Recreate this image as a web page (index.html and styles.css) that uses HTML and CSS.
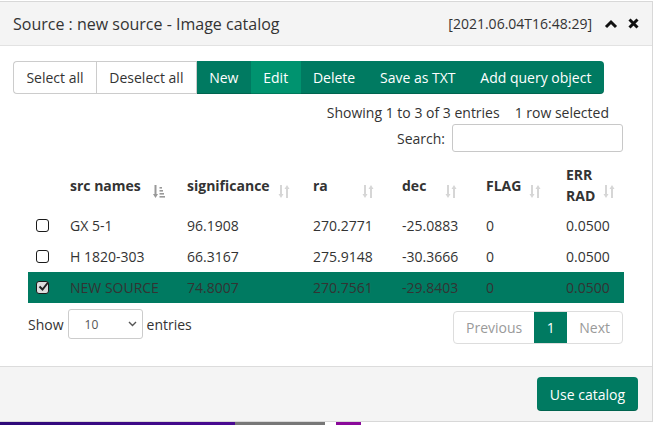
FILE: index.html
```html
<!DOCTYPE html>
<html>
<head>
<meta charset="utf-8">
<link rel="stylesheet" href="styles.css">
</head>
<body>
<div class="modal">
  <div class="modal-header">
    <div class="title">Source : new source - Image catalog</div>
    <div class="header-right">
      <span class="stamp">[2021.06.04T16:48:29]</span>
      <svg class="hicon" width="14" height="10" viewBox="0 0 14 10"><polyline points="2,8 7,3 12,8" fill="none" stroke="#111" stroke-width="3"/></svg>
      <svg class="hicon" width="11" height="11" viewBox="0 0 11 11"><path d="M1.5 1.5 L9.5 9.5 M9.5 1.5 L1.5 9.5" stroke="#111" stroke-width="3"/></svg>
    </div>
  </div>
  <div class="modal-body">
    <div class="btn-group">
      <span class="btn btn-light">Select all</span>
      <span class="btn btn-light">Deselect all</span>
      <span class="btn btn-green">New</span>
      <span class="btn btn-green btn-active">Edit</span>
      <span class="btn btn-green">Delete</span>
      <span class="btn btn-green">Save as TXT</span>
      <span class="btn btn-green btn-last">Add query object</span>
    </div>
    <div class="wrapper">
      <div class="info">Showing 1 to 3 of 3 entries<span class="sel">1 row selected</span></div>
      <div class="search"><label>Search:</label><span class="search-input"></span></div>
      <table class="grid">
        <colgroup>
          <col class="c0"><col class="c1"><col class="c2"><col class="c3"><col class="c4"><col class="c5"><col class="c6">
        </colgroup>
        <thead>
          <tr>
            <th></th>
            <th class="p1"><div class="th"><span>src names</span>
              <svg class="sort" width="12" height="15" viewBox="0 0 12 15"><path d="M2.5 1 V12" stroke="#999" stroke-width="2"/><path d="M0 10 L2.5 14 L5 10 Z" fill="#999"/><rect x="6.5" y="3" width="2.5" height="1.6" fill="#999"/><rect x="6.5" y="6" width="3.5" height="1.6" fill="#999"/><rect x="6.5" y="9" width="4.5" height="1.6" fill="#999"/><rect x="6.5" y="12" width="5.5" height="1.6" fill="#999"/></svg>
            </div></th>
            <th class="p2"><div class="th"><span>significance</span>
              <svg class="sort" width="12" height="15" viewBox="0 0 12 15"><path d="M3 1 V12" stroke="#d6d6d6" stroke-width="2"/><path d="M0.5 10 L3 14 L5.5 10 Z" fill="#d6d6d6"/><path d="M9 3 V14" stroke="#d6d6d6" stroke-width="2"/><path d="M6.5 5 L9 1 L11.5 5 Z" fill="#d6d6d6"/></svg>
            </div></th>
            <th class="p3"><div class="th"><span>ra</span>
              <svg class="sort" width="12" height="15" viewBox="0 0 12 15"><path d="M3 1 V12" stroke="#d6d6d6" stroke-width="2"/><path d="M0.5 10 L3 14 L5.5 10 Z" fill="#d6d6d6"/><path d="M9 3 V14" stroke="#d6d6d6" stroke-width="2"/><path d="M6.5 5 L9 1 L11.5 5 Z" fill="#d6d6d6"/></svg>
            </div></th>
            <th class="p4"><div class="th"><span>dec</span>
              <svg class="sort" width="12" height="15" viewBox="0 0 12 15"><path d="M3 1 V12" stroke="#d6d6d6" stroke-width="2"/><path d="M0.5 10 L3 14 L5.5 10 Z" fill="#d6d6d6"/><path d="M9 3 V14" stroke="#d6d6d6" stroke-width="2"/><path d="M6.5 5 L9 1 L11.5 5 Z" fill="#d6d6d6"/></svg>
            </div></th>
            <th class="p5"><div class="th"><span>FLAG</span>
              <svg class="sort" width="12" height="15" viewBox="0 0 12 15"><path d="M3 1 V12" stroke="#d6d6d6" stroke-width="2"/><path d="M0.5 10 L3 14 L5.5 10 Z" fill="#d6d6d6"/><path d="M9 3 V14" stroke="#d6d6d6" stroke-width="2"/><path d="M6.5 5 L9 1 L11.5 5 Z" fill="#d6d6d6"/></svg>
            </div></th>
            <th class="p6"><div class="th"><span>ERR<br>RAD</span>
              <svg class="sort" width="12" height="15" viewBox="0 0 12 15"><path d="M3 1 V12" stroke="#d6d6d6" stroke-width="2"/><path d="M0.5 10 L3 14 L5.5 10 Z" fill="#d6d6d6"/><path d="M9 3 V14" stroke="#d6d6d6" stroke-width="2"/><path d="M6.5 5 L9 1 L11.5 5 Z" fill="#d6d6d6"/></svg>
            </div></th>
          </tr>
        </thead>
        <tbody>
          <tr>
            <td><span class="cb"></span></td><td>GX 5-1</td><td>96.1908</td><td>270.2771</td><td>-25.0883</td><td>0</td><td>0.0500</td>
          </tr>
          <tr>
            <td><span class="cb"></span></td><td>H 1820-303</td><td>66.3167</td><td>275.9148</td><td>-30.3666</td><td>0</td><td>0.0500</td>
          </tr>
          <tr class="selected">
            <td><span class="cb cb-on"><svg width="11" height="11" viewBox="0 0 11 11"><path d="M1.5 5.5 L4.5 8.5 L10 1.5" fill="none" stroke="#222" stroke-width="2"/></svg></span></td><td>NEW SOURCE</td><td>74.8007</td><td>270.7561</td><td>-29.8403</td><td>0</td><td>0.0500</td>
          </tr>
        </tbody>
      </table>
      <div class="bottom">
        <div class="length">Show <span class="select"><span>10</span><svg width="9" height="6" viewBox="0 0 9 6"><polyline points="1,1 4.5,4.5 8,1" fill="none" stroke="#555" stroke-width="1.4"/></svg></span> entries</div>
        <div class="pager">
          <span class="pg pg-off">Previous</span><span class="pg pg-cur">1</span><span class="pg pg-off">Next</span>
        </div>
      </div>
    </div>
  </div>
  <div class="modal-footer">
    <span class="btn btn-green btn-round">Use catalog</span>
  </div>
</div>
<div class="strip">
  <span class="s1"></span><span class="s2"></span><span class="s3"></span><span class="s4"></span>
</div>
</body>
</html>
```
FILE: styles.css
```css
html, body {
  margin: 0;
  padding: 0;
  background: #ffffff;
}
body {
  font-family: "Open Sans", "Liberation Sans", sans-serif;
  font-size: 14px;
  color: #333;
  padding-top: 1px;
}
.modal {
  width: 652px;
  border: 1px solid #d8d8d8;
  border-left: none;
  background: #fff;
}
.modal-header {
  height: 43px;
  background: #f4f4f4;
  border-bottom: 1px solid #e2e2e2;
  display: flex;
  align-items: center;
  justify-content: space-between;
  padding: 0 13px 0 13px;
}
.title {
  font-size: 16px;
  color: #333;
}
.header-right {
  display: flex;
  align-items: center;
  gap: 0;
}
.stamp {
  font-size: 14px;
  color: #333;
  margin-right: 12px;
}
.hicon { display: block; margin-right: 10px; }
.hicon:last-child { margin-right: 0; }

.modal-body {
  padding: 15px 13px 0 13px;
  height: 305px;
}
.btn-group {
  display: flex;
  height: 33px;
  width: max-content;
}
.btn {
  display: flex;
  align-items: center;
  padding: 0 12.4px;
  font-size: 14px;
  white-space: nowrap;
  box-sizing: border-box;
}
.btn-light {
  background: #fff;
  color: #333;
  border: 1px solid #ccc;
}
.btn-light:first-child {
  border-radius: 4px 0 0 4px;
  border-right: none;
}
.btn-green {
  background: #007a61;
  color: #fff;
  box-shadow: inset 0 -1px 0 rgba(0,0,0,0.18);
}
.btn-active { background: #00936f; }
.btn-last { border-radius: 0 4px 4px 0; }
.btn-round { border-radius: 4px; padding: 0 13px; }

.wrapper {
  padding: 0 16px 0 15px;
}
.info {
  text-align: right;
  margin-top: 9px;
  line-height: 20px;
  padding-right: 14px;
}
.info .sel { margin-left: 15px; }
.search {
  display: flex;
  justify-content: flex-end;
  align-items: center;
  margin-top: 1px;
}
.search label { margin-right: 7px; }
.search-input {
  display: block;
  width: 171px;
  height: 28px;
  box-sizing: border-box;
  border: 1px solid #c8c8c8;
  border-radius: 3px;
}
.grid {
  width: 596px;
  table-layout: fixed;
  border-collapse: collapse;
  margin-top: 8px;
}
.c0 { width: 32px; }
.c1 { width: 117px; }
.c2 { width: 126px; }
.c3 { width: 89px; }
.c4 { width: 84px; }
.c5 { width: 80px; }
.c6 { width: 68px; }
.grid th {
  text-align: left;
  font-weight: bold;
  padding: 4px 10px 4px 10px;
  height: 42px;
  line-height: 21px;
  vertical-align: middle;
}
.grid th.p1 { padding-right: 12px; }
.grid th.p2 { padding-right: 13px; }
.grid th.p3 { padding-right: 18px; }
.grid th.p4 { padding-right: 19px; }
.grid th.p5 { padding-right: 15px; }
.grid th.p6 { padding-right: 9px; }
.th {
  display: flex;
  align-items: center;
  justify-content: space-between;
}
.sort { display: block; margin-top: 12px; flex: none; }
.grid td {
  padding: 5px 10px;
  line-height: 21px;
  white-space: nowrap;
}
.grid td:first-child { padding: 5px 0 5px 8px; }
.grid tr.selected td { background: #007a61; color: #333; }
.cb {
  display: block;
  width: 13px;
  height: 13px;
  box-sizing: border-box;
  border: 1.6px solid #1a1a1a;
  border-radius: 3px;
  background: #fff;
}
.cb-on { background: #dcdcdc; }
.cb-on svg { display: block; margin: -1px 0 0 0.5px; }

.bottom {
  display: flex;
  justify-content: space-between;
  align-items: flex-start;
  margin-top: 6px;
}
.length {
  display: flex;
  align-items: center;
  gap: 4px;
  height: 30px;
}
.select {
  display: flex;
  align-items: center;
  justify-content: space-between;
  width: 75px;
  height: 30px;
  box-sizing: border-box;
  border: 1px solid #ccc;
  border-radius: 3px;
  padding: 0 5px 0 16px;
  font-size: 12px;
  color: #555;
}
.pager {
  display: flex;
  height: 33px;
  margin-top: 2px;
  border: 1px solid #ddd;
  border-radius: 4px;
  box-sizing: border-box;
  overflow: hidden;
}
.pg {
  display: flex;
  align-items: center;
  padding: 0 12px;
}
.pg-off { color: #9a9a9a; }
.pg-cur { background: #007a61; color: #fff; padding: 0 12.5px; }

.modal-footer {
  height: 54px;
  background: #f4f4f4;
  border-top: 1px solid #dcdcdc;
  display: flex;
  justify-content: flex-end;
  align-items: center;
  padding: 0 14px 0 0;
}
.modal-footer .btn { height: 34px; }

.strip {
  display: flex;
  height: 3px;
}
.strip span { display: block; height: 3px; }
.s1 { width: 235px; background: linear-gradient(90deg, #2d0a78, #4a0a92); }
.s2 { width: 90px; background: #777; }
.s3 { width: 11px; background: #fff; }
.s4 { width: 25px; background: #8a0a9a; }
```
